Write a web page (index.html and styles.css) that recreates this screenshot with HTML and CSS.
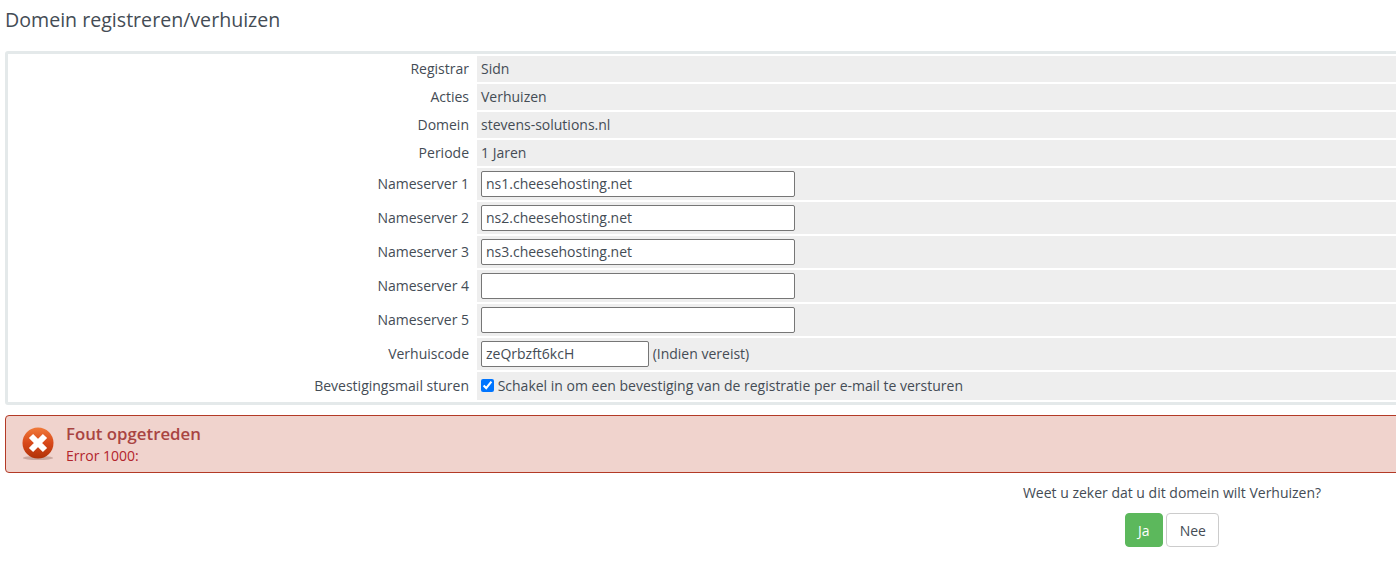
FILE: index.html
```html
<!DOCTYPE html>
<html lang="nl">
<head>
    <meta charset="UTF-8">
    <meta name="viewport" content="width=device-width, initial-scale=1.0">
    <title>Domein registreren/verhuizen</title>
    <link rel="stylesheet" href="styles.css">
</head>
<body>
    <div class="content">
        <h1>Domein registreren/verhuizen</h1>

        <div class="panel">
            <table class="form-table">
                <tr><th>Registrar</th><td>Sidn</td></tr>
                <tr><th>Acties</th><td>Verhuizen</td></tr>
                <tr><th>Domein</th><td>stevens-solutions.nl</td></tr>
                <tr><th>Periode</th><td>1 Jaren</td></tr>
                <tr class="input-row"><th>Nameserver 1</th><td><input type="text" class="input-wide" value="ns1.cheesehosting.net"></td></tr>
                <tr class="input-row"><th>Nameserver 2</th><td><input type="text" class="input-wide" value="ns2.cheesehosting.net"></td></tr>
                <tr class="input-row"><th>Nameserver 3</th><td><input type="text" class="input-wide" value="ns3.cheesehosting.net"></td></tr>
                <tr class="input-row"><th>Nameserver 4</th><td><input type="text" class="input-wide"></td></tr>
                <tr class="input-row"><th>Nameserver 5</th><td><input type="text" class="input-wide"></td></tr>
                <tr class="input-row"><th>Verhuiscode</th><td><input type="text" class="input-small" value="zeQrbzft6kcH"> <span class="hint">(Indien vereist)</span></td></tr>
                <tr class="check-row"><th>Bevestigingsmail sturen</th><td><label class="check"><input type="checkbox" checked> Schakel in om een bevestiging van de registratie per e-mail te versturen</label></td></tr>
            </table>
        </div>

        <div class="error-box">
            <svg class="error-icon" width="34" height="34" viewBox="0 0 34 34">
                <defs>
                    <linearGradient id="red" x1="0" y1="0" x2="0" y2="1">
                        <stop offset="0" stop-color="#f07a3a"/>
                        <stop offset="0.5" stop-color="#d8481a"/>
                        <stop offset="1" stop-color="#b03208"/>
                    </linearGradient>
                </defs>
                <ellipse cx="17" cy="31" rx="15" ry="2" fill="#c9a79f"/>
                <circle cx="17" cy="16" r="15.5" fill="url(#red)"/>
                <path d="M10 9 L17 16 L24 9 M10 23 L17 16 L24 23" fill="none" stroke="#fff" stroke-width="6"/>
            </svg>
            <div>
                <div class="error-title">Fout opgetreden</div>
                <div class="error-text">Error 1000:</div>
            </div>
        </div>

        <div class="confirm">
            <p>Weet u zeker dat u dit domein wilt Verhuizen?</p>
            <div class="buttons">
                <button class="btn btn-yes">Ja</button>
                <button class="btn">Nee</button>
            </div>
        </div>
    </div>
</body>
</html>
```

FILE: styles.css
```css
html, body {
    overflow: hidden;
}

body {
    margin: 0;
    font-family: "Open Sans", sans-serif;
    font-size: 14px;
    color: #444c55;
    background-color: #fff;
}

.content {
    width: 1500px;
    padding: 0 0 0 5px;
}

h1 {
    margin: 0;
    padding-top: 7px;
    height: 51px;
    box-sizing: border-box;
    font-size: 19.6px;
    font-weight: 400;
    line-height: 25px;
}

.panel {
    border: 3px solid #e4e9ea;
    border-radius: 3px;
}

.form-table {
    width: 100%;
    border-collapse: separate;
    border-spacing: 0 2px;
    table-layout: fixed;
}

.form-table th {
    width: 461px;
    padding: 0 8px 2px 0;
    font-weight: 400;
    text-align: right;
}

.form-table td {
    height: 24px;
    padding: 0 4px 2px;
    background-color: #eee;
}

.form-table .input-row td {
    height: 32px;
    padding-bottom: 0;
}

.form-table .check-row td {
    height: 26px;
}

input[type="text"] {
    height: 26px;
    box-sizing: border-box;
    padding: 0 4px 2px;
    border: 1px solid #767676;
    border-radius: 2px;
    font-family: inherit;
    font-size: 14px;
    color: #444c55;
    vertical-align: middle;
}

.input-wide {
    width: 314px;
}

.input-small {
    width: 168px;
}

.hint {
    vertical-align: -1px;
}

.check input {
    margin: 0;
    vertical-align: -1px;
}

.error-box {
    display: flex;
    align-items: center;
    gap: 11px;
    height: 58px;
    box-sizing: border-box;
    margin-top: 10px;
    padding-left: 15px;
    border: 1px solid #b33a26;
    border-radius: 4px;
    background-color: #f0d3cd;
}

.error-title {
    font-size: 16.8px;
    font-weight: 600;
    line-height: 22px;
    color: #a94442;
}

.error-text {
    margin: 1px 0 -1px;
    line-height: 20px;
    color: #b3242c;
}

.confirm {
    width: 600px;
    margin-left: 867px;
    text-align: center;
}

.confirm p {
    margin: 0;
    padding-top: 10px;
    line-height: 20px;
}

.buttons {
    margin-top: 10px;
    display: flex;
    justify-content: center;
    gap: 3px;
}

.btn {
    height: 34px;
    padding: 0 12.5px;
    border: 1px solid #ccc;
    border-radius: 4px;
    background-color: #fff;
    font-family: inherit;
    font-size: 14px;
    color: #444c55;
}

.btn-yes {
    border-color: #5cb85c;
    background-color: #5cb85c;
    color: #fff;
}
```
